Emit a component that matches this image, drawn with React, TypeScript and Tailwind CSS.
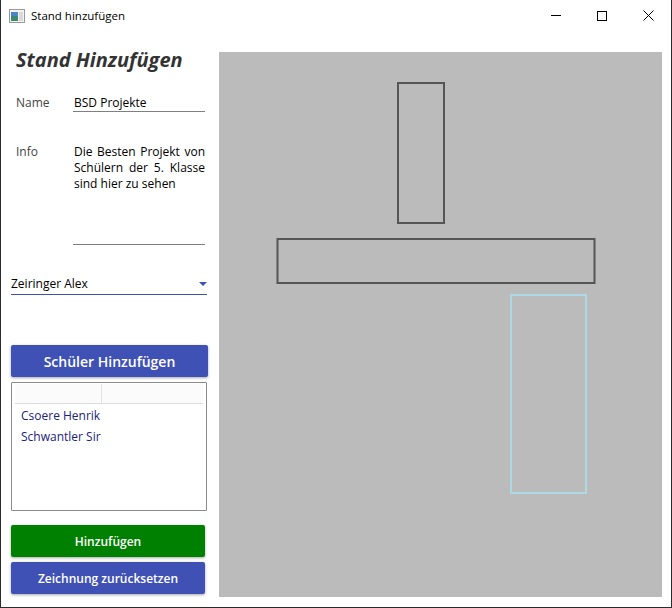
import React from "react";

const font = { fontFamily: '"Open Sans", "Noto Sans", sans-serif' };

function TitleBar() {
  return (
    <div className="h-[31px] flex items-center shrink-0">
      <svg width="16" height="14" viewBox="0 0 16 14" className="ml-[8px]">
        <rect x="0.5" y="0.5" width="15" height="13" fill="#f3f3f3" stroke="#9a9a9a" />
        <rect x="2" y="3" width="7" height="9" fill="#3b8a6e" />
        <rect x="2" y="3" width="7" height="4" fill="#4a86c7" />
        <rect x="10" y="3" width="4" height="9" fill="#d9d9d9" />
      </svg>
      <span className="ml-[6px] text-[11.5px] text-black" style={font}>Stand hinzufügen</span>
      <div className="ml-auto flex h-full">
        <div className="w-[46px] flex items-center justify-center">
          <div className="w-[10px] h-px bg-black" />
        </div>
        <div className="w-[46px] flex items-center justify-center">
          <div className="w-[10px] h-[10px] border border-black" />
        </div>
        <div className="w-[46px] flex items-center justify-center">
          <svg width="11" height="11" viewBox="0 0 11 11">
            <path d="M0.5 0.5 L10.5 10.5 M10.5 0.5 L0.5 10.5" stroke="#000" strokeWidth="1" />
          </svg>
        </div>
      </div>
    </div>
  );
}

function Canvas() {
  return (
    <div className="flex-1 mt-[21px] mb-[10px] mr-[9px] bg-[#bbbbbb] relative">
      <svg className="absolute inset-0" width="100%" height="100%">
        <rect x="179" y="31" width="46" height="140" fill="none" stroke="#555555" strokeWidth="2" />
        <rect x="58.5" y="187" width="317" height="44" fill="none" stroke="#555555" strokeWidth="2" />
        <rect x="292" y="243" width="75" height="198" fill="none" stroke="#add8e6" strokeWidth="2" />
      </svg>
    </div>
  );
}

function LeftPanel() {
  return (
    <div className="w-[218px] shrink-0 flex flex-col pl-[10px] text-[12px] leading-[16px] text-[#333]" style={font}>
      <div className="mt-[14px] h-[30px] pl-[5px] text-[20px] leading-[30px] font-bold italic text-[#333]">
        Stand Hinzufügen
      </div>
      <div className="mt-[20px] flex">
        <div className="w-[62px] pl-[5px] text-[#444]">Name</div>
        <div className="w-[132px] h-[17px] border-b border-[#808080] text-black pl-[1px]">BSD Projekte</div>
      </div>
      <div className="mt-[32px] flex">
        <div className="w-[62px] pl-[5px] text-[#444]">Info</div>
        <div className="w-[132px] h-[101px] border-b border-[#808080] text-black pl-[1px] text-justify">
          Die Besten Projekt von Schülern der 5. Klasse sind hier zu sehen
        </div>
      </div>
      <div className="mt-[31px] w-[196px] h-[19px] border-b border-[#3f51b5] flex items-start text-black">
        <span>Zeiringer Alex</span>
        <svg width="8" height="4" viewBox="0 0 8 4" className="ml-auto mt-[6px]">
          <path d="M0 0 L8 0 L4 4 Z" fill="#3f51b5" />
        </svg>
      </div>
      <button className="mt-[50px] w-[197px] h-[32px] pt-[2px] rounded-[2px] bg-[#3f51b5] text-white text-[14px] font-semibold shadow-[0_1px_3px_rgba(0,0,0,0.35)]">
        Schüler Hinzufügen
      </button>
      <div className="mt-[5px] w-[196px] h-[129px] border border-[#8a8a8a] rounded-[1px] px-[3px] pt-[1px]">
        <div className="h-[20px] flex border-b border-[#dcdcdc] bg-[#fbfbfb]">
          <div className="w-[87px] border-r border-[#e2e2e2]" />
        </div>
        <div className="pl-[6px] mt-[1px] text-[#1a237e] flex flex-col">
          <div className="h-[21px] leading-[21px]">Csoere Henrik</div>
          <div className="h-[21px] leading-[21px]">Schwantler Sir</div>
        </div>
      </div>
      <button className="mt-[14px] w-[194px] h-[32px] pt-[2px] rounded-[2px] bg-[#008000] text-white text-[12px] font-semibold shadow-[0_1px_3px_rgba(0,0,0,0.35)]">
        Hinzufügen
      </button>
      <button className="mt-[5px] w-[194px] h-[32px] pt-[2px] rounded-[2px] bg-[#3f51b5] text-white text-[12px] font-semibold shadow-[0_1px_3px_rgba(0,0,0,0.35)]">
        Zeichnung zurücksetzen
      </button>
    </div>
  );
}

export default function App() {
  return (
    <div className="w-[672px] h-[608px] bg-white flex flex-col border-x border-b border-[#2b2b2b]">
      <TitleBar />
      <div className="flex-1 flex min-h-0">
        <LeftPanel />
        <Canvas />
      </div>
    </div>
  );
}
